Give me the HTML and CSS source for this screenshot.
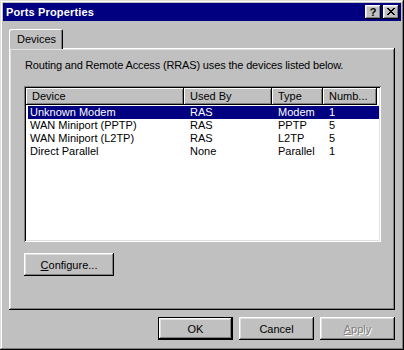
FILE: index.html
```html
<!DOCTYPE html>
<html lang="en">
<head>
  <meta charset="UTF-8" />
  <title>Ports Properties</title>
  <link rel="stylesheet" href="styles.css">
</head>
<body>

<div class="window">
  <div class="titlebar">
    <span class="title">Ports Properties</span>
    <div class="caption-btns">
      <button class="cap-btn help">?</button>
      <button class="cap-btn close">
        <svg width="8" height="7" viewBox="0 0 8 7">
          <path d="M0 0h2v1H0zM6 0h2v1H6zM1 1h2v1H1zM5 1h2v1H5zM2 2h4v1H2zM3 3h2v1H3zM2 4h4v1H2zM1 5h2v1H1zM5 5h2v1H5zM0 6h2v1H0zM6 6h2v1H6z" fill="#000"/>
        </svg>
      </button>
    </div>
  </div>

  <div class="content">
    <div class="tabs">
      <div class="tab active">Devices</div>
    </div>

    <div class="panel">
      <p class="intro">Routing and Remote Access (RRAS) uses the devices listed below.</p>

      <div class="listview">
        <div class="lv-header">
          <div class="lv-col">Device</div>
          <div class="lv-col">Used By</div>
          <div class="lv-col">Type</div>
          <div class="lv-col">Numb...</div>
        </div>
        <div class="lv-row selected">
          <span>Unknown Modem</span><span>RAS</span><span>Modem</span><span>1</span>
        </div>
        <div class="lv-row">
          <span>WAN Miniport (PPTP)</span><span>RAS</span><span>PPTP</span><span>5</span>
        </div>
        <div class="lv-row">
          <span>WAN Miniport (L2TP)</span><span>RAS</span><span>L2TP</span><span>5</span>
        </div>
        <div class="lv-row">
          <span>Direct Parallel</span><span>None</span><span>Parallel</span><span>1</span>
        </div>
      </div>

      <button class="btn configure"><u>C</u>onfigure...</button>
    </div>

    <div class="dialog-btns">
      <button class="btn default">OK</button>
      <button class="btn">Cancel</button>
      <button class="btn" disabled><u>A</u>pply</button>
    </div>
  </div>
</div>

</body>
</html>
```

FILE: styles.css
```css
body {
  margin: 0;
  background: #c0c0c0;
  font-family: 'Liberation Sans', Arial, sans-serif;
  font-size: 11px;
  color: #000;
}

.window {
  width: 404px;
  height: 350px;
  box-sizing: border-box;
  padding: 3px;
  background: #c0c0c0;
  box-shadow: inset -1px -1px #000, inset 1px 1px #dfdfdf,
              inset -2px -2px #808080, inset 2px 2px #fff;
}

.titlebar {
  height: 18px;
  background: #000080;
  color: #fff;
  display: flex;
  align-items: center;
  justify-content: space-between;
  padding: 0 2px 0 3px;
}

.title {
  font-weight: bold;
  font-size: 11px;
  letter-spacing: 0.15px;
}

.caption-btns {
  display: flex;
  gap: 2px;
}

.cap-btn {
  width: 16px;
  height: 14px;
  padding: 0;
  border: none;
  background: #c0c0c0;
  box-shadow: inset -1px -1px #000, inset 1px 1px #fff,
              inset -2px -2px #808080, inset 2px 2px #dfdfdf;
  display: flex;
  align-items: center;
  justify-content: center;
  font-family: 'Liberation Sans', Arial, sans-serif;
  font-weight: bold;
  font-size: 11px;
  line-height: 1;
  color: #000;
}

.cap-btn svg {
  margin-top: -1px;
  margin-left: -1px;
}

.content {
  padding: 8px 6px 0 6px;
}

.tabs {
  display: flex;
  position: relative;
  z-index: 1;
  margin-bottom: -1px;
}

.tab {
  height: 20px;
  padding: 0 7px 0 8px;
  line-height: 20px;
  background: #c0c0c0;
  border-radius: 2px 2px 0 0;
  box-shadow: inset 1px 1px #fff, inset -1px 0 #000, inset -2px 0 #808080;
}

.panel {
  height: 262px;
  box-sizing: border-box;
  padding: 11px 14px 0 15px;
  box-shadow: inset -1px -1px #000, inset 1px 1px #fff,
              inset -2px -2px #808080, inset 2px 2px #dfdfdf;
}

.intro {
  margin: 0 0 14px 1px;
  line-height: 13px;
  letter-spacing: -0.15px;
}

.listview {
  width: 357px;
  height: 156px;
  box-sizing: border-box;
  padding: 2px;
  background: #fff;
  box-shadow: inset 1px 1px #808080, inset -1px -1px #fff,
              inset 2px 2px #000, inset -2px -2px #dfdfdf;
}

.lv-header {
  display: grid;
  grid-template-columns: 158px 88px 51px 54px;
  height: 17px;
  margin-bottom: 1px;
}

.lv-col {
  background: #c0c0c0;
  padding-left: 6px;
  line-height: 17px;
  box-shadow: inset -1px -1px #000, inset 1px 1px #fff,
              inset -2px -2px #808080;
  white-space: nowrap;
  overflow: hidden;
}

.lv-row {
  display: grid;
  grid-template-columns: 156px 88px 51px 54px;
  height: 13px;
  line-height: 13px;
  margin-left: 2px;
  white-space: nowrap;
}

.lv-row span {
  padding-left: 6px;
}

.lv-row span:first-child {
  padding-left: 2px;
}

.lv-row.selected {
  background: #000080;
  color: #fff;
}

.btn {
  width: 75px;
  height: 23px;
  padding: 0;
  border: none;
  background: #c0c0c0;
  font-family: 'Liberation Sans', Arial, sans-serif;
  font-size: 11px;
  color: #000;
  box-shadow: inset -1px -1px #000, inset 1px 1px #fff,
              inset -2px -2px #808080, inset 2px 2px #dfdfdf;
}

.btn u {
  text-decoration-thickness: 1px;
  text-underline-offset: 1px;
}

.btn.configure {
  width: 90px;
  margin-top: 11px;
}

.btn.default {
  box-shadow: inset 0 0 0 1px #000, inset -2px -2px #000, inset 2px 2px #fff,
              inset -3px -3px #808080, inset 3px 3px #dfdfdf;
}

.btn:disabled {
  color: #808080;
  text-shadow: 1px 1px #fff;
}

.dialog-btns {
  display: flex;
  justify-content: flex-end;
  gap: 6px;
  margin-top: 7px;
}
```
